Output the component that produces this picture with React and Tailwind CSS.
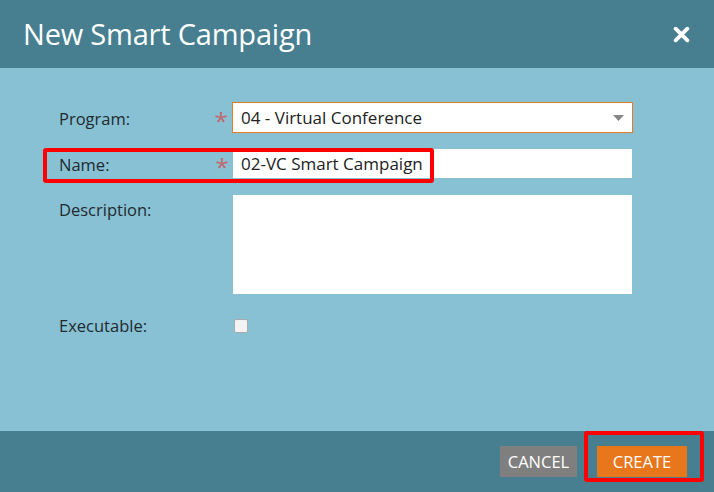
const Star = () => (
  <span className="w-[22px] text-[24px] leading-none text-[#c0686c] text-center pt-[6px]">*</span>
);

const App = () => {
  return (
    <div className="relative flex flex-col w-[714px] h-[492px] bg-[#88c1d3] font-['Open_Sans',sans-serif] overflow-hidden">
      <div className="h-[68px] bg-[#477f91] flex items-center justify-between pl-[23px] pr-[24px]">
        <h1 className="text-[29px] text-white tracking-[-0.2px]">New Smart Campaign</h1>
        <svg width="17" height="17" viewBox="0 0 16 16">
          <path d="M2.5 2.5 L13.5 13.5 M13.5 2.5 L2.5 13.5" stroke="white" strokeWidth="3.6" strokeLinecap="round" />
        </svg>
      </div>

      <div className="flex-1 pt-[34px] pl-[59px] text-[16.5px] text-[#1f2a30]">
        <div className="flex h-[31px] items-center">
          <label className="w-[151px] pt-[3px]">Program:</label>
          <Star />
          <div className="w-[401px] h-[31px] bg-white border border-[#e67c22] flex items-center justify-between pl-[8px] pr-[8px]">
            <span className="text-[#222] text-[17px]">04 - Virtual Conference</span>
            <svg width="11" height="6" viewBox="0 0 11 6">
              <path d="M0 0 H11 L5.5 6 Z" fill="#888" />
            </svg>
          </div>
        </div>

        <div className="flex h-[29px] items-center mt-[16px]">
          <label className="w-[152px] pt-[3px]">Name:</label>
          <Star />
          <div className="w-[399px] h-[29px] bg-white flex items-center pl-[8px]">
            <span className="text-[#222] text-[17px]">02-VC Smart Campaign</span>
          </div>
        </div>

        <div className="flex mt-[17px]">
          <label className="w-[174px] leading-[30px]">Description:</label>
          <div className="w-[399px] h-[99px] bg-white"></div>
        </div>

        <div className="flex items-center mt-[24px] h-[15px]">
          <label className="w-[174px] pt-[2px]">Executable:</label>
          <input type="checkbox" className="ml-[1px] w-[14px] h-[14px] rounded-[2px] border border-[#aaa] bg-[#f3f3f3] appearance-none" />
        </div>
      </div>

      <div className="h-[61px] bg-[#477f91] flex items-start justify-end pt-[15px] pr-[27px] gap-[20px]">
        <button className="w-[77px] h-[31px] pt-[2px] bg-[#7f7f7f] text-white text-[16.5px] uppercase">Cancel</button>
        <button className="w-[90px] h-[31px] pt-[2px] bg-[#e8761b] text-white text-[16.5px] uppercase">Create</button>
      </div>

      <div className="absolute left-[43px] top-[148px] w-[391px] h-[35px] border-[4px] border-[#ff0000] rounded-[3px]"></div>
      <div className="absolute left-[584px] top-[431px] w-[120px] h-[51px] border-[4px] border-[#ff0000] rounded-[3px]"></div>
    </div>
  );
};

export default App;
